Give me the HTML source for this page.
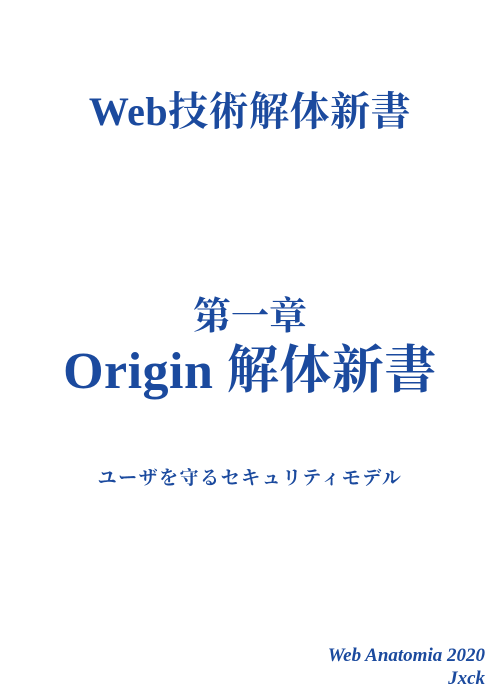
<!DOCTYPE html>
<html><head><meta charset="utf-8"><style>
body{margin:0;width:500px;height:700px;background:#fff;position:relative;overflow:hidden;font-family:"Liberation Serif","Noto Serif CJK SC",serif;color:#1b4a9e;font-weight:bold}
.c{position:absolute;left:0;width:500px;text-align:center;white-space:nowrap;line-height:1}
</style></head><body>
<div class="c" style="top:92px;font-size:40px;letter-spacing:0.5px">Web技術解体新書</div>
<div class="c" style="top:298px;font-size:38px">第一章</div>
<div class="c" style="top:346px;font-size:52px;letter-spacing:0.5px">Origin 解体新書</div>
<div class="c" style="top:469px;font-size:19px;letter-spacing:1.5px">ユーザを守るセキュリティモデル</div>
<div style="position:absolute;right:15px;top:644px;font-size:19px;font-style:italic;text-align:right;line-height:23px">Web Anatomia 2020<br>Jxck</div>
</body></html>
